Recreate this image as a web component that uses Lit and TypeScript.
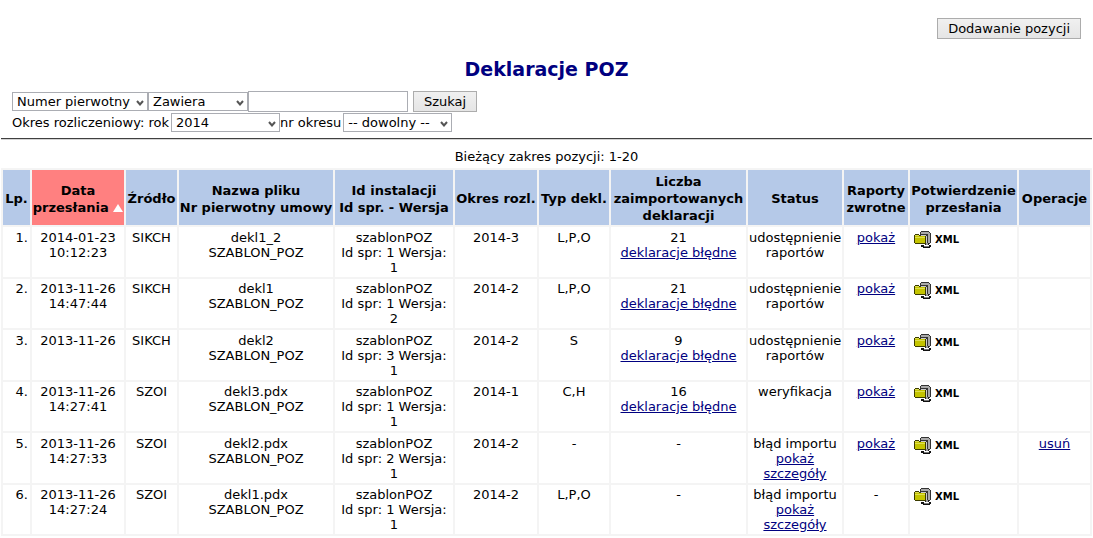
import { LitElement, html, css, svg, nothing } from 'lit';
import { customElement, property } from 'lit/decorators.js';

interface Declaration {
  sent: string[];
  source: string;
  file: string;
  spr: number;
  version: number;
  period: string;
  type: string;
  imported: string;
  status: string;
  failed: boolean;
  report: boolean;
  removable: boolean;
}

const row = (
  sent: string[], source: string, file: string, spr: number, version: number, period: string,
  type: string, imported: string, status: string, failed = false, report = true, removable = false,
): Declaration => ({ sent, source, file, spr, version, period, type, imported, status, failed, report, removable });

const ROWS: Declaration[] = [
  row(['2014-01-23', '10:12:23'], 'SIKCH', 'dekl1_2', 1, 1, '2014-3', 'L,P,O', '21', 'udostępnienie raportów'),
  row(['2013-11-26', '14:47:44'], 'SIKCH', 'dekl1', 1, 2, '2014-2', 'L,P,O', '21', 'udostępnienie raportów'),
  row(['2013-11-26'], 'SIKCH', 'dekl2', 3, 1, '2014-2', 'S', '9', 'udostępnienie raportów'),
  row(['2013-11-26', '14:27:41'], 'SZOI', 'dekl3.pdx', 1, 1, '2014-1', 'C,H', '16', 'weryfikacja'),
  row(['2013-11-26', '14:27:33'], 'SZOI', 'dekl2.pdx', 2, 1, '2014-2', '-', '-', 'błąd importu', true, true, true),
  row(['2013-11-26', '14:27:24'], 'SZOI', 'dekl1.pdx', 1, 1, '2014-2', 'L,P,O', '-', 'błąd importu', true, false),
];

// Column widths as a share of the table.
const COLUMNS = [27, 92, 51, 154, 118, 82, 70, 135, 94, 64, 107, 71];
const TOTAL = COLUMNS.reduce((a, b) => a + b, 0);

const lines = (parts: string[]) => parts.map((p, i) => html`${i ? html`<br>` : nothing}${p}`);

@customElement('xml-archive')
export class XmlArchive extends LitElement {
  static styles = css`
    :host { display: block; padding-left: 3px; }
    .link { display: flex; align-items: center; gap: 3px; text-decoration: none; color: #000; }
    .zip { display: block; width: 18px; height: 18px; }
    .kind { padding-top: 1px; font: 900 10px/18px "DejaVu Sans", Verdana, sans-serif; }
  `;
  render() {
    return html`<a class="link" href="#xml" title="XML">
      <svg class="zip" viewBox="0 0 18 18" shape-rendering="crispEdges" aria-hidden="true">
        ${svg`
          <path d="M7 0h8v1h1v1h1v10h-1v1h-4v-1H6V1h1z" fill="#333"/>
          <path d="M7 1h8v1h1v10h-2V3H7z" fill="#aaa"/>
          <path d="M7 3h6v1h1v8h-1V4H7z" fill="#333"/>
          <path d="M7 4h5v1h1v7h-1V5H7z" fill="#ccc"/>
          <path d="M11 12h4v2h-4z" fill="#222"/>
          <path d="M12 12h2v2h-2z" fill="#999"/>
          <path d="M7 14h3v1h5v-1h2v2h-1v1H9v-1H7z" fill="#111"/>
          <path d="M10 15h5v1h-5z" fill="#777"/>
          <path d="M0 4h1V3h4v1h1v1h6v8H1v-1H0z" fill="#3c3c00"/>
          <path d="M1 5h10v7H1z" fill="#c4c400"/>
          <path d="M1 4h4v1H1zM1 6h10v1H1z" fill="#dede50"/>
        `}
      </svg><span class="kind">XML</span></a>`;
  }
}

@customElement('pick-list')
export class PickList extends LitElement {
  @property() label = '';
  @property() value = '';
  @property() size = 'm';
  static styles = css`
    :host { display: block; }
    .box { display: grid; align-items: center; }
    .select, .arrow { grid-area: 1 / 1; }
    .select {
      appearance: none; box-sizing: border-box; height: 19px; margin: 0; padding: 0 4px;
      border: 1px solid #abadb3; border-radius: 0; background: #fff; color: #000;
      font: 13px/17px "DejaVu Sans", Verdana, sans-serif;
    }
    .l { width: 136px; }
    .m { width: 100px; }
    .y { width: 109px; }
    .arrow { justify-self: end; width: 8px; height: 6px; margin: 2px 4px 0 0; pointer-events: none; }
  `;
  render() {
    return html`<div class="box">
      <select class="select ${this.size}" aria-label=${this.label}><option>${this.value}</option></select>
      <svg class="arrow" viewBox="0 0 8 6" aria-hidden="true"><path d="M1 1l3 3.5L7 1" fill="none" stroke="#555" stroke-width="2"/></svg>
    </div>`;
  }
}

@customElement('app-root')
export class AppRoot extends LitElement {
  static styles = css`
    :host { display: block; color: #000; font: 13px/15px "DejaVu Sans", Verdana, sans-serif; }
    .top { display: flex; justify-content: flex-end; padding: 18px 12px 0; }
    .button {
      box-sizing: border-box; height: 21px; margin: 0; padding: 0 10px; border: 1px solid #acacac;
      border-radius: 0; background: linear-gradient(#f0f0f0, #e5e5e5); color: #000; font: inherit;
    }
    .title { margin: 18px 0 10px; text-align: center; color: #000080; font-size: 19px; line-height: 24px; }
    .filters { display: flex; flex-direction: column; gap: 1px; padding: 0 12px; }
    .line { display: flex; align-items: center; }
    .text {
      box-sizing: border-box; width: 160px; height: 21px; margin: 0 5px 0 0; padding: 0 3px;
      border: 1px solid #abadb3; border-radius: 0; background: #fff; font: inherit;
    }
    .before { margin-right: 2px; }
    .rule { height: 1px; margin: 6px 1px 0; border: 0; background: #404040; box-shadow: 0 1px #d4d4d4; }
    .range { margin: 10px 0 4px; text-align: center; }
    .wrap { padding: 0 1px; }
    .table { width: 100%; table-layout: fixed; border-collapse: separate; border-spacing: 2px; background: #f4f4f4; }
    .head { padding: 3px 0 1px; background: #b5c9e8; line-height: 17px; white-space: nowrap; font-weight: bold; }
    .sorted { background: #ff8080; }
    .sort { display: inline-block; width: 10px; height: 8px; fill: #fff; }
    .cell { padding: 3px 1px 2px; background: #fff; text-align: center; vertical-align: top; }
    .row:nth-child(even) .cell { padding-top: 2px; }
    .number { padding-right: 2px; text-align: right; }
    .link { color: #000080; }
  `;

  private columns() {
    const sort = html`<svg class="sort" viewBox="0 0 10 8" aria-hidden="true"><path d="M5 0l5 8H0z"/></svg>`;
    return [
      'Lp.', html`Data<br>przesłania ${sort}`, 'Źródło', html`Nazwa pliku<br>Nr pierwotny umowy`,
      html`Id instalacji<br>Id spr. - Wersja`, 'Okres rozl.', 'Typ dekl.',
      html`Liczba<br>zaimportowanych<br>deklaracji`, 'Status', html`Raporty<br>zwrotne`,
      html`Potwierdzenie<br>przesłania`, 'Operacje',
    ];
  }

  render() {
    return html`
      <div class="top"><button class="button" type="button">Dodawanie pozycji</button></div>
      <h1 class="title">Deklaracje POZ</h1>
      <form class="filters" @submit=${(e: Event) => e.preventDefault()}>
        <div class="line">
          <pick-list size="l" label="Pole" value="Numer pierwotny"></pick-list>
          <pick-list size="m" label="Warunek" value="Zawiera"></pick-list>
          <input class="text" type="text" aria-label="Szukany tekst">
          <button class="button" type="submit">Szukaj</button>
        </div>
        <div class="line">
          <span class="before">Okres rozliczeniowy: rok</span>
          <pick-list size="y" label="Okres rozliczeniowy: rok" value="2014"></pick-list>
          <span class="before">nr okresu</span>
          <pick-list size="y" label="nr okresu" value="-- dowolny --"></pick-list>
        </div>
      </form>
      <hr class="rule">
      <p class="range">Bieżący zakres pozycji: 1-20</p>
      <div class="wrap">
        <table class="table">
          <colgroup>${COLUMNS.map((w) => html`<col style="width:${(w / TOTAL) * 100}%">`)}</colgroup>
          <thead><tr>${this.columns().map((c, i) => html`<th class="head ${i === 1 ? 'sorted' : ''}" scope="col">${c}</th>`)}</tr></thead>
          <tbody>${ROWS.map((r, i) => html`<tr class="row">
            <td class="cell number">${i + 1}.</td>
            <td class="cell">${lines(r.sent)}</td>
            <td class="cell">${r.source}</td>
            <td class="cell">${r.file}<br>SZABLON_POZ</td>
            <td class="cell">szablonPOZ<br>Id spr: ${r.spr} Wersja:<br>${r.version}</td>
            <td class="cell">${r.period}</td>
            <td class="cell">${r.type}</td>
            <td class="cell">${r.imported}${r.imported === '-' ? nothing : html`<br><a class="link" href="#bledne">deklaracje błędne</a>`}</td>
            <td class="cell">${r.status}${r.failed ? html`<br><a class="link" href="#szczegoly">pokaż szczegóły</a>` : nothing}</td>
            <td class="cell">${r.report ? html`<a class="link" href="#raport">pokaż</a>` : '-'}</td>
            <td class="cell"><xml-archive></xml-archive></td>
            <td class="cell">${r.removable ? html`<a class="link" href="#usun">usuń</a>` : nothing}</td>
          </tr>`)}</tbody>
        </table>
      </div>`;
  }
}
